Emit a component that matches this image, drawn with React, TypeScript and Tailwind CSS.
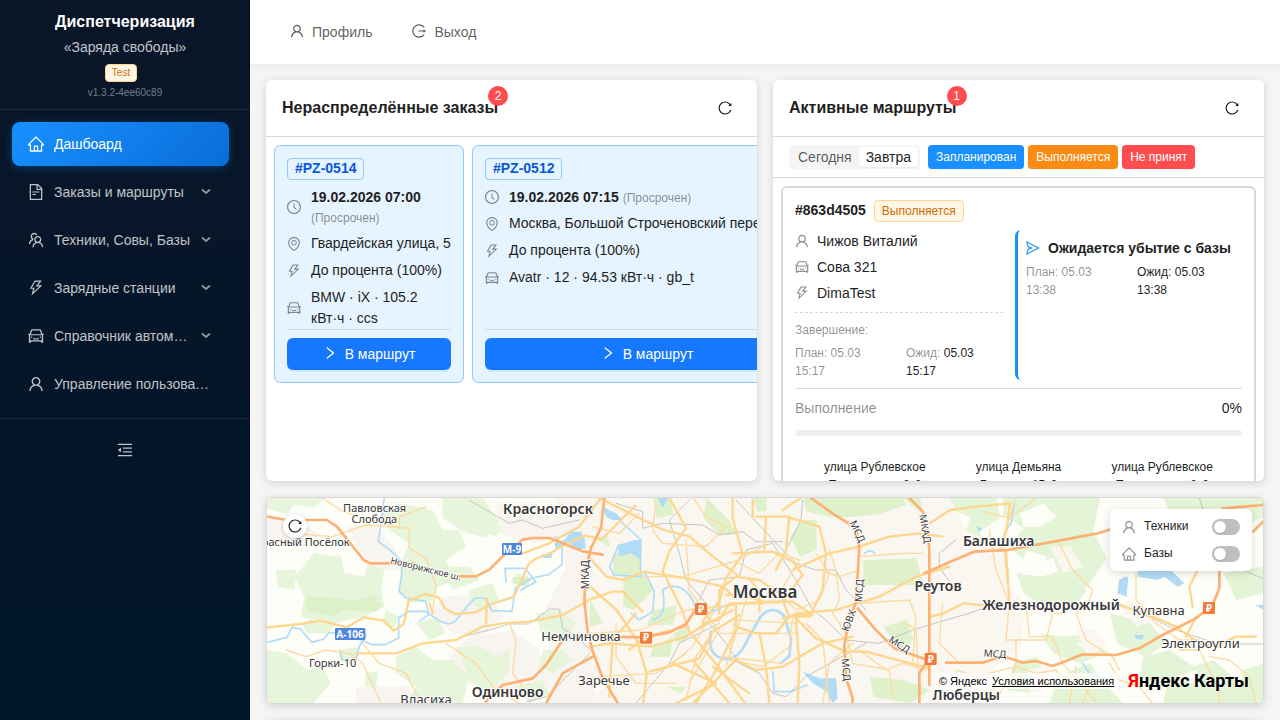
import React, { useState } from 'react';
import type { IconType } from 'react-icons';
import {
    AiOutlineCar,
    AiOutlineClockCircle,
    AiOutlineEnvironment,
    AiOutlineFileText,
    AiOutlineHome,
    AiOutlineLogout,
    AiOutlineMenuFold,
    AiOutlineReload,
    AiOutlineRight,
    AiOutlineSend,
    AiOutlineTeam,
    AiOutlineThunderbolt,
    AiOutlineUser,
} from 'react-icons/ai';

interface GlyphProps {
    icon: IconType;
    size?: number;
    className?: string;
}

// the icon set has an empty rim of 64 units, cut it off so that icons fill their box
const Glyph: React.FunctionComponent<GlyphProps> = ({ icon: Icon, size = 14, className = '' }) => {
    return <Icon size={size} viewBox="64 64 896 896" className={`shrink-0 ${className}`} />;
};

interface MenuEntry {
    label: string;
    icon: IconType;
    active?: boolean;
    nested?: boolean;
}

const menu: MenuEntry[] = [
    { label: 'Дашбоард', icon: AiOutlineHome, active: true },
    { label: 'Заказы и маршруты', icon: AiOutlineFileText, nested: true },
    { label: 'Техники, Совы, Базы', icon: AiOutlineTeam, nested: true },
    { label: 'Зарядные станции', icon: AiOutlineThunderbolt, nested: true },
    { label: 'Справочник автомобилей', icon: AiOutlineCar, nested: true },
    { label: 'Управление пользователями', icon: AiOutlineUser },
];

const Sidebar: React.FunctionComponent = () => {
    return (
        <aside className="w-[250px] shrink-0 bg-linear-to-b from-[#0a1628] to-[#001529] text-white">
            <div className="flex flex-col items-center border-b border-white/10 pt-2.5 pb-2">
                <h1 className="text-base leading-6 font-bold">Диспетчеризация</h1>
                <p className="mt-0.5 text-sm leading-[22px] text-white/75">«Заряда свободы»</p>
                <span className="mt-1.5 mr-2 rounded border border-[#ffd591] bg-[#fff7e6] px-1.5 text-[10px] leading-4 text-[#d46b08]">Test</span>
                <span className="mt-0.5 text-[10px] leading-[17px] text-white/45">v1.3.2-4ee60c89</span>
            </div>
            <nav className="flex flex-col gap-1 border-b border-white/10 py-3 pr-[21px] pl-3">
                {menu.map((item) => (
                    <a
                        key={item.label}
                        href="#"
                        className={
                            item.active
                                ? 'flex h-11 items-center rounded-lg bg-linear-[135deg] from-[#1890ff] to-[#096dd9] px-4 text-sm text-white shadow-[0_2px_8px_rgba(24,144,255,0.3)]'
                                : 'flex h-11 items-center rounded-lg px-4 text-sm text-white/75'
                        }
                    >
                        <Glyph icon={item.icon} size={16} />
                        <span className="ml-2.5 flex-1 truncate">{item.label}</span>
                        {item.nested && (
                            <svg className="mr-0.5 ml-2 shrink-0 opacity-75" width="10" height="8" viewBox="0 0 10 8" fill="none" stroke="currentColor" strokeWidth="1.8">
                                <path d="M1 1.500 5 5l4-3.500" />
                            </svg>
                        )}
                    </a>
                ))}
            </nav>
            <div className="flex justify-center pt-[15px]">
                <button aria-label="Свернуть меню" className="flex size-8 items-center justify-center text-white/75">
                    <Glyph icon={AiOutlineMenuFold} size={16} />
                </button>
            </div>
        </aside>
    );
};

interface PanelProps {
    title: string;
    count: number;
    children: React.ReactNode;
}

const Panel: React.FunctionComponent<PanelProps> = (props) => {
    return (
        <section className="flex h-[401px] min-w-0 flex-1 flex-col overflow-hidden rounded-md bg-white shadow-[0_2px_8px_rgba(0,0,0,0.15)]">
            <header className="flex h-[57px] shrink-0 items-center justify-between border-b border-[#d9d9d9] px-4">
                <h2 className="relative text-base leading-6 font-bold">
                    {props.title}
                    <span className="absolute -top-2.5 -right-2.5 size-5 rounded-full bg-[#ff4d4f] text-center text-xs leading-5 font-normal text-white">{props.count}</span>
                </h2>
                <button aria-label="Обновить" className="flex size-8 items-center justify-center">
                    <Glyph icon={AiOutlineReload} />
                </button>
            </header>
            {props.children}
        </section>
    );
};

interface Order {
    id: string;
    date: string;
    address: string;
    task: string;
    car: string;
    cardClass: string;
}

const orders: Order[] = [
    { id: '#PZ-0514', date: '19.02.2026 07:00', address: 'Гвардейская улица, 5', task: 'До процента (100%)', car: 'BMW · iX · 105.2 кВт·ч · ccs', cardClass: 'w-[190px]' },
    { id: '#PZ-0512', date: '19.02.2026 07:15', address: 'Москва, Большой Строченовский переулок', task: 'До процента (100%)', car: 'Avatr · 12 · 94.53 кВт·ч · gb_t', cardClass: 'w-[350px]' },
];

const OrderCard: React.FunctionComponent<{ order: Order }> = ({ order }) => {
    return (
        <article className={`${order.cardClass} flex shrink-0 flex-col rounded-md border border-[#91caff] bg-[#e6f4ff] p-3`}>
            <span className="self-start rounded border border-[#91caff] px-[7px] pb-0.5 text-sm leading-[18px] font-bold text-[#0958d9]">{order.id}</span>
            <div className="mt-[7px] flex flex-col gap-1.5 text-sm leading-[21px]">
                <div className="flex items-center gap-2.5 leading-5">
                    <Glyph icon={AiOutlineClockCircle} className="text-black/45" />
                    <p><b>{order.date}</b> <span className="text-xs leading-4 text-black/45">(Просрочен)</span></p>
                </div>
                <div className="flex items-center gap-2.5">
                    <Glyph icon={AiOutlineEnvironment} className="text-black/45" />
                    <p className="whitespace-nowrap">{order.address}</p>
                </div>
                <div className="flex items-center gap-2.5">
                    <Glyph icon={AiOutlineThunderbolt} className="text-black/45" />
                    <p>{order.task}</p>
                </div>
                <div className="flex items-center gap-2.5">
                    <Glyph icon={AiOutlineCar} className="text-black/45" />
                    <p>{order.car}</p>
                </div>
            </div>
            <div className="mt-auto border-t border-[#d9d9d9] pt-2">
                <button className="flex h-8 w-full items-center justify-center gap-2 rounded-md bg-[#1677ff] text-sm text-white shadow-[0_2px_0_rgba(5,145,255,0.1)]">
                    <Glyph icon={AiOutlineRight} className="mb-0.5" />
                    В маршрут
                </button>
            </div>
        </article>
    );
};

const stops = ['улица Рублевское Предместье, 2к2', 'улица Демьяна Бедного, 15к2', 'улица Рублевское Предместье, 2к2'];

const RouteCard: React.FunctionComponent = () => {
    return (
        <article className="shrink-0 rounded-md border-2 border-[#d9d9d9] p-3">
            <div className="flex items-start gap-2">
                <b className="text-sm leading-5">#863d4505</b>
                <span className="rounded border border-[#ffd591] bg-[#fff7e6] px-[7px] text-xs leading-5 text-[#d46b08]">Выполняется</span>
            </div>
            <div className="mt-2 flex gap-3">
                <div className="min-w-0 flex-1">
                    <div className="flex flex-col gap-1 border-b border-dashed border-[#d9d9d9] pb-2 text-sm leading-[22px]">
                        <p className="flex items-center gap-2"><Glyph icon={AiOutlineUser} className="text-black/45" />Чижов Виталий</p>
                        <p className="flex items-center gap-2"><Glyph icon={AiOutlineCar} className="text-black/45" />Сова 321</p>
                        <p className="flex items-center gap-2"><Glyph icon={AiOutlineThunderbolt} className="text-black/45" />DimaTest</p>
                    </div>
                    <p className="mt-2 text-xs leading-[18px] text-black/45">Завершение:</p>
                    <div className="mt-[5px] grid grid-cols-2 gap-x-3.5 text-xs leading-[18px]">
                        <p className="text-black/45">План: 05.03 15:17</p>
                        <p><span className="text-black/45">Ожид:</span> 05.03 15:17</p>
                    </div>
                </div>
                <div className="min-w-0 flex-1 rounded-l-md border-l-3 border-[#1890ff] p-2">
                    <p className="flex items-center gap-2 text-sm leading-5 font-bold whitespace-nowrap">
                        <Glyph icon={AiOutlineSend} className="text-[#1890ff]" />
                        Ожидается убытие с базы
                    </p>
                    <div className="mt-[5px] grid grid-cols-2 gap-x-3.5 text-xs leading-[18px]">
                        <p className="text-black/45">План: 05.03 13:38</p>
                        <p>Ожид: 05.03 13:38</p>
                    </div>
                </div>
            </div>
            <div className="mt-2 border-t border-[#d9d9d9] pt-2">
                <div className="flex justify-between text-sm leading-[22px]">
                    <span id="route-progress" className="text-black/45">Выполнение</span>
                    <span>0%</span>
                </div>
                <div role="progressbar" aria-labelledby="route-progress" aria-valuenow={0} className="mt-[11px] h-1.5 rounded-full bg-[#f0f0f0]"></div>
            </div>
            <ol className="mt-[22px] flex px-2 text-center text-xs leading-[18px]">
                {stops.map((stop, index) => (
                    <li key={index} className="flex-1 px-3">{stop}</li>
                ))}
            </ol>
        </article>
    );
};

// Map geometry. The map is drawn in three sheets laid side by side,
// the city and the east have their own origin (see the translate of each group).
const urbanWest = [
    'M270 110h90l60 70 20 60-70 0-60-60z',
    'M560 320l140-10 40 70-60 60-90-10-60-60z',
    'M720 40l120 0 110 60-20 40-100 20-100-30z',
    'M640 440l130-20 80 60 20 90-110 40-130-30-50-80z',
    'M900 24h120v620H870l-20-110 50-100-30-80 60-120z',
    'M33 90l90 0 60 40-40 40-110-20z',
    'M300 590l160 0 20 50H300z',
];
const woodsWest = [
    'M33 24h170l-30 30-60-10-20 30-60-20z',
    'M60 240h60l-5 60-50-10z',
    'M175 190l80 10 10 50 60 10 10-40 50 20-10 60 10 50-60 30-90 20-100-20 10-60-30-60z',
    'M370 60l60-20 100 20 30 60 50 0 20 50-60 40 30 60-80 30-70-30-20-40 30-70-60-40z',
    'M560 24h120l50 70-40 50-70-20-60-40z',
    'M690 90l50 20-20 30-60-20z',
    'M560 230l80 0 30 40-80 30z',
    'M440 250l60-20 50 40-20 60-60 10-40-30z',
    'M640 300l70-20 20 50-50 30-40-20z',
    'M780 250l40 10-10 30-40-10z',
    'M33 480l60 10 60 50 50-10 20 50-50 60H33z',
    'M140 400l60-30 40 30-20 30-70 0z',
    'M250 480l60-10-20 60-40-20z',
    'M390 360l40 20-20 40-30-20z',
    'M420 500l60-30 50 40 60 0 50 50-20 80H450l30-50-60-40z',
    'M480 400l60-20 30 50-50 20z',
    'M600 470l70 0 60 30 30-30 0 70-60 70-50-30-30-60z',
    'M330 545l35 0-5 50-35-10z',
    'M840 370l70-10 50 40-40 50-60 0z',
    'M860 480l60 0 30 30-60 40-40-20z',
    'M780 590l80-20 20 40-60 30z',
];
const parksWest = [
    'M150 320l100 5 40 10 60-20 30 30-20 20-100-5-30 20-80-20z',
    'M770 260l60 5-20 25-40-10z',
];
const woodsEast = [
    'M0 24h200l10 60-60 40 10 60-70-10-60-60-30-10z',
    'M220 24h290l-20 100 40 80-60 90-80-30-20-60-70 20-60-50 40-60-60-40z',
    'M100 190l80-10 60 60-10 70-60 20-50-50z',
    'M20 360l120-10 80 50 10 50-70 20-60 30-70-20z',
    'M260 250l70 10 80-20 60 60-40 60-90-10-60-40z',
    'M330 430l70 10 80-10 50 60-80 30-80-30z',
    'M250 520l70-20 30 60-40 50-80-10z',
    'M380 560l100-40 40 60 60 60H360z',
    'M540 370l120 30 50 60-60 40-90-40z',
    'M640 500l80-20 70 50 60-20 70 60v70H700l10-50-80-30z',
    'M880 250l119-20v80l-80 20z',
    'M940 540l59-20v120h-90z',
    'M700 24h299v60l-60 20-100-20-110 0z',
];
const clearings = [
    'M60 60l60 20-10 40-50-20z',
    'M270 70l70-30 40 40-50 30-50 0z',
    'M290 180l60 20-20 40-60-10z',
    'M110 380l50-10-10 30z',
    'M440 460l50 0-10 30z',
    'M740 560l60-20 10 50z',
];
const parksCity = [
    'M190 24h50l10 50-50 10z',
    'M350 24l70 70 20 40-50 0-50-50z',
    'M490 24h40l0 40-30 0z',
    'M640 90l40 0 0 90-50 20-30-60z',
    'M640 24h300l10 20-90 30-120 10-90-20z',
    'M70 190l80-10 0 70-80 10z',
    'M20 150l30-20 10 40z',
    'M100 260l60-10 30 50-60 60-30-10z',
    'M820 210l160-5 20 80-180 0z',
    'M880 410l70-20 20 60-40 30z',
    'M190 360l70-15-10 60-80 0z',
    'M250 430l50-20-10 40-30 10z',
    'M0 330l40 70-40 10z',
    'M190 470l60-30-10 60-60 0z',
    'M230 590l60 0-20 20z',
    'M840 560l100 10 80 30-60 40-110-20z',
    'M940 24l50 0 10 50z',
];
const urbanEast = [
    'M0 24h60l50 100 120 50 0 110 60 60-20 130-80 60 20 100H0z',
    'M360 170l60 0 40 60-60 20z',
    'M440 420l60 0 30 50-60 30z',
    'M560 340l80-10 40 60-60 20z',
    'M290 540l60-10 30 60-80 20z',
];
const waterFills = [
    'M895 160l30-10 20-25 30 0 10 20 5 30-30 5-20-20-40 20z',
    'M860 192l30 0-5 12-22 0z',
    'M1085 165l50-15 20 0 0 60-30-20-35 10z',
    'M1040 50l40 20 20 20-30 0-20-10z',
    'M1205 24h30l-15 30z',
    'M1640 545l50 20 50 0 5 60-15 14-20-35-40-25z',
    'M2605 260l12 0-5 60-28-10 5-40z',
    'M2645 240l100 0 40 40-20 10-40-30-20 10-60-10z',
    'M2160 110l20 5-10 12z',
    'M2635 435l30 0-8 15-20-5z',
    'M3000 345l21 0v15z',
];
const rivers = [
    'M33 457l60-15 15-30 25 5 35 40 35-10 15-18 35 0 35 10 60 25 40 0 40-20 0-60 30-20 50 0 45 30 25 8 20-8 40-50 20-20 30 0 20 38 60 2 10-70 50-30 50-10 40-30 0-50-20-35',
    'M385 24l-18 130 40 30 30 30 0 40-8 50 20 20 60 10 10 40-30 20',
    'M250 480l10 30 40 0 10-40 20-35',
    'M750 275l-3-40 60 0 33 40-45 25',
    'M1090 90l65 60-2 110-80-5-12-25 25-60',
    'M1165 245l30 60-5 60-40 25-25-20',
    'M1220 300c40-25 80-5 100 55',
    'M1220 300c10 60 0 80-30 90',
    'M1370 365l40-20 20 0',
    'M1551 545l3 60 50 0 50-20',
    'M2275 40l-10 60-15 20',
    'M1825 190q20-15 30 0',
    'M2480 520l20 30 60 20',
];
const minorRoads = [
    'M100 130l130 10 100-35 130 10 0 60 50 30 30 80-10 80',
    'M90 480l60 20 60-20 70 10 40 30 60 130',
    'M320 460l50 60 80 30 40 80',
    'M570 460l30 20 60 40 50 70 80 50',
    'M760 400l20 50-10 100 30 40',
    'M430 110l0-30 80-30',
    'M200 24l60 40 170 50',
    'M1150 70l-60 60-80-20',
    'M1200 40l-10 80 30 40 130 10 60-60-60-30-40-60',
    'M1290 150l10 150 80 110-60 90-30 130',
    'M1160 260l120 0 170-50 70-40',
    'M1002 430l150-10 140-60 150-15',
    'M1450 220l60 30 60-60 60 20-60 100 50 50 70-30 30-80-40-60',
    'M1250 520l60-50 60-100M1300 580l90-160M1440 370l-20 140 100 20 80-60 10-90',
    'M1400 500l180 20M1380 430l240 0M1440 390l180 10M1470 330l-60 200M1650 400l50 50 20 190',
    'M1080 400l0 100 60 80 120 0M1030 560l170-10 90-60',
    'M1720 180l20 60 10 90-20 40 40 60 20 90 110 20 10 80',
    'M1810 240l-60 20-60-20M1810 340l150-10 20 50-10 140',
    'M1950 400l30 20 10 160M1810 200l130-10 60 0',
    'M1810 480l80 60 50-20 70 20 20-60M1700 640l20-120 70-60',
    'M2200 120l20 120 40 100-10 110 120 0 20-80 40 0',
    'M2260 340l50 0 10 100 70 0 30 80 120 140',
    'M2410 160l40 80 60 60-10 30-40 40 30 80 80 50 20 40',
    'M2280 24l-40 120 20 180M2340 24l-80 60-80-20',
    'M2640 250l0 80 60 70 70 50 60 0M2770 480l60 0 60 120 0 40',
    'M2860 500l60 10 60 50 20 80M2100 540l60 20 120-30 60 20 60-10 40 50 60 0-20 50',
    'M2280 450l0 80-60 100M2060 340l-10 120 60 60',
    'M2560 520l30 50 60 20 40 50M2440 640l20-110',
];
const roads = [
    'M33 412l100-10 60-10 80 20 50-30 60 10 20 20 10 10 30-20 15-70 50-20 40 10 20 35 30 15 60-5 50-25 60-20 10-10 40-90 20-15 50-20 40-25 60-25 50 10 60-60 40-40',
    'M300 490l120 0 80-30 100-10 80-40 60-10 80-5 100-20 90-50 60-20 30 0 60 60',
    'M690 400l3-75M520 340l10 30',
    'M800 190l80-30 90-50 60-80',
    'M1030 24l100 50 90 45 80 20 70 60 80 60',
    'M1002 205l50 55 50 10 60-25 130 20 110 25 30 30',
    'M1240 24l50 90-50 70-20 60 60 120 20 60 90 110 80 110',
    'M1430 24l0 60 30 110-50 70-20 70-50 60',
    'M1490 80l0-50M1500 80l100 0-10 100-30 60M1580 60l60-40M1530 80l-5 100M1590 80l100 30 20 80-10 110-40 80-60 0',
    'M1430 190l120-5 60 30 30 40-60 80-60 0-60-20-50 0',
    'M1440 340l170-5 60 40-60 0-30 10M1440 340l0 70 60 20 60 0 40-50-30-70-60-40-70-10-50 40 0 70M1480 265l30 40 0 60',
    'M1340 400l50-10 30-50 100 0M1320 420l110-60M1290 440l60-40',
    'M1002 470l60-10 120 10 110-30',
    'M1060 620l10-170 70-80M1002 290l80 70 60 90 30 100-10 90',
    'M1510 430l20 100 10 110M1440 420l-60 120-60 100M1440 510l-130 130M1370 530l110 80M1310 510l110 130M1250 520l130 60-120 60',
    'M1620 390l10 130-5 120M1620 385l60 60 90 40 60 0 190 50M1620 370l120-10 130-40 110-60 100-30',
    'M1610 240l110-50 90-20 90-30 90-10 70 10',
    'M1120 480l50-40 120-30M1180 545l150-40 40-80 80-50',
    'M1440 510l60 30 80-10 120-70 90-20',
    'M2022 100l60-40 80-10 100-10-10 80-20 60M2250 180l10 160',
    'M2022 380l40-10 60-30 100 10M2690 380l70 30 70 50 50 10 60-30 60 0M2820 380l-30 60M2810 350l-10-60 30-60 60-20',
    'M2580 340l130 50',
];
const highways = [
    'M33 80l60 10 120 0 30 20 80 100 20 10 130 0M610 259l50 0 40-20 40-40 60-50 30-5 50 0 100 40 60 10',
    'M1045 24l-10 90-30 60-15 60-5 100 10 90 15 60 30 80 60 100',
    'M870 640l50-90 90-50M690 635l50-50 90-20 40-40 60-90',
    'M1665 24l70 50 65 40 10 60-10 160-10 30-15 50-10 50 5 100 20 60-5 80',
    'M1805 355l50 60 60 60 100 35',
    'M1960 24l40 40 15 50 5 70 0 400',
    'M1040 440l120 2 80-15 50-25 30-45',
    'M2005 250l90-40 60-25 100-5 110-20 160-30 100-30M2900 55l121-10M2890 245l0 50-20 50-50 40-100 50-70 40-70 20-100-2-50 20-40 15-50-15-40 5-60-20-60 20-50 0-60 0',
    'M1990 640l0-90 40-60M3021 95l-30 30',
];
const rails = [
    'M640 30l50 30 70 40 40-10 60 25 110-25',
    'M620 440l80-20 60-18 60 0 60-45 30 0 10 60 40 20 50 50',
    'M1002 490l-80 80-50 50-60 15',
    'M1080 40l80 25 0 50 60-15 120 5 50 30 70-10 40 30 80 0',
    'M1440 30l120 130 60 60 60 20 60 0 30 60 60 60M1300 30l-60 60 30 100 20 80 60 70 10 60 50 60 40 60 60 30 40 60 40 10 60-60 180-100',
    'M1330 330l30-60 90-10 20-80 80-20 70 110 50 90 40 30 60 60 100 10 100-40 100-30 70-20 80-30 50 20',
    'M1140 640l100-120 30-60 120-60M1640 30l-5 60-40 80M2100 150l-50 40 0 40 40 60M2830 24l20 60M2960 240l60 25M2680 380l80 40 90 30M2940 462h81',
];

interface MapLabel {
    x: number;
    y: number;
    size: number;
    text: string;
    bold?: boolean;
    turn?: number;
}

const mapLabels: MapLabel[] = [
    { x: 356, y: 65, size: 33, text: 'Павловская' },
    { x: 355, y: 99, size: 33, text: 'Слобода' },
    { x: 149, y: 167, size: 33, text: 'расный Посёлок' },
    { x: 876, y: 72, size: 42, text: 'Красногорск', bold: true },
    { x: 230, y: 530, size: 33, text: 'Горки-10' },
    { x: 510, y: 641, size: 39, text: 'Власиха' },
    { x: 755, y: 620, size: 42, text: 'Одинцово', bold: true },
    { x: 975, y: 454, size: 39, text: 'Немчиновка' },
    { x: 1044, y: 586, size: 39, text: 'Заречье' },
    { x: 1527, y: 324, size: 51, text: 'Москва', bold: true },
    { x: 2046, y: 303, size: 42, text: 'Реутов', bold: true },
    { x: 2228, y: 167, size: 42, text: 'Балашиха', bold: true },
    { x: 2385, y: 360, size: 42, text: 'Железнодорожный', bold: true },
    { x: 2708, y: 376, size: 39, text: 'Купавна' },
    { x: 2833, y: 474, size: 39, text: 'Электроугли' },
    { x: 2131, y: 630, size: 42, text: 'Люберцы', bold: true },
    { x: 510, y: 246, size: 27, text: 'Новорижское ш.', turn: 14 },
    { x: 990, y: 264, size: 30, text: 'МКАД', turn: -90 },
    { x: 1804, y: 134, size: 30, text: 'МСД', turn: 65 },
    { x: 1810, y: 312, size: 30, text: 'МСД', turn: -87 },
    { x: 1779, y: 402, size: 30, text: 'ЮВХ', turn: -70 },
    { x: 1770, y: 549, size: 30, text: 'МСД', turn: 84 },
    { x: 1930, y: 474, size: 30, text: 'МСД', turn: 32 },
    { x: 2007, y: 126, size: 30, text: 'МКАД', turn: 80 },
    { x: 2217, y: 502, size: 30, text: 'МСД', turn: 4 },
];

const tollPoints = [[1335, 357], [1170, 443], [2024, 507], [2859, 354]];

const CityMap: React.FunctionComponent = () => {
    return (
        <svg className="h-[205px] w-full" viewBox="33 24 2988 615" preserveAspectRatio="xMidYMid slice" aria-label="Карта Москвы">
            <rect x="-3000" y="0" width="9000" height="700" fill="#fefef8" />
            {urbanWest.map((d) => <path key={d} d={d} fill="#f8f4ef" />)}
            {woodsWest.map((d) => <path key={d} d={d} fill="#e7f5db" />)}
            {parksWest.map((d) => <path key={d} d={d} fill="#dcf1ca" />)}
            <g transform="translate(1002 0)">
                <path d="M0 24H1060V640H10l20-60-30-60z" fill="#faf6f0" />
                {parksCity.map((d) => <path key={d} d={d} fill="#def1cb" />)}
            </g>
            <g transform="translate(2022 0)">
                {woodsEast.map((d) => <path key={d} d={d} fill="#e4f4d6" />)}
                {clearings.map((d) => <path key={d} d={d} fill="#fefef8" />)}
                {urbanEast.map((d) => <path key={d} d={d} fill="#faf6f0" />)}
            </g>
            {waterFills.map((d) => <path key={d} d={d} fill="#b1dcf7" />)}
            <g fill="none" strokeLinejoin="round" strokeLinecap="round">
                {rivers.map((d) => <path key={d} d={d} stroke="#b1dcf7" strokeWidth="5" />)}
                <path d="M1365 425q-15 75 45 83q40 0 65-60l40-70q35-35 70 0l20 70-5 50-25 20" stroke="#b1dcf7" strokeWidth="8" />
                {rails.map((d) => <path key={d} d={d} stroke="#c2c2c2" strokeWidth="3" strokeDasharray="9 3" />)}
                {minorRoads.map((d) => <path key={d} d={d} stroke="#fcdaa0" strokeWidth="4" />)}
                {roads.map((d) => <path key={d} d={d} stroke="#fdd68f" strokeWidth="7" />)}
                {highways.map((d) => <path key={d} d={d} stroke="#fdb173" strokeWidth="8" />)}
            </g>
            <g fontFamily="'Noto Sans', sans-serif" textAnchor="middle" fill="#35383d" stroke="#fffdf8" strokeWidth="6" strokeLinejoin="round" paintOrder="stroke">
                {mapLabels.map((label, index) => (
                    <text
                        key={index}
                        x={label.x}
                        y={label.y}
                        fontSize={label.size}
                        fontWeight={label.bold ? 600 : 400}
                        transform={label.turn ? `rotate(${label.turn} ${label.x} ${label.y - 10})` : undefined}
                    >
                        {label.text}
                    </text>
                ))}
            </g>
            <g fontFamily="'Noto Sans', sans-serif" textAnchor="middle" fill="#fff" fontWeight="700" fontSize="30">
                <rect x="738" y="159" width="60" height="36" rx="4" fill="#4f86e0" />
                <text x="768" y="188">М-9</text>
                <rect x="237" y="414" width="91" height="36" rx="4" fill="#4f86e0" />
                <text x="282" y="443">А-106</text>
                {tollPoints.map(([x, y]) => (
                    <g key={x}>
                        <rect x={x - 18} y={y - 18} width="36" height="36" rx="4" fill="#f47a3c" />
                        <text x={x} y={y + 11}>₽</text>
                    </g>
                ))}
            </g>
        </svg>
    );
};

const layers = [
    { id: 'technicians', label: 'Техники', icon: AiOutlineUser },
    { id: 'bases', label: 'Базы', icon: AiOutlineHome },
];

const MapPanel: React.FunctionComponent = () => {
    const [shown, setShown] = useState<string[]>([]);
    const toggle = (id: string) => {
        setShown(shown.includes(id) ? shown.filter((s) => s !== id) : [...shown, id]);
    }
    return (
        <section className="relative shrink-0 overflow-hidden rounded-md border border-[#d9d9d9] bg-white shadow-[0_2px_8px_rgba(0,0,0,0.15)]">
            <CityMap />
            <button aria-label="Обновить карту" className="absolute top-4 left-4 flex size-6 items-center justify-center rounded-full bg-white shadow-[0_1px_4px_rgba(0,0,0,0.2)]">
                <Glyph icon={AiOutlineReload} />
            </button>
            <div className="absolute top-[11px] right-[11px] flex w-[142px] flex-col gap-[7px] rounded-md bg-white px-3 pt-2 pb-[7px] text-xs leading-[18px] shadow-[0_2px_8px_rgba(0,0,0,0.15)]">
                {layers.map((layer) => (
                    <div key={layer.id} className="flex h-5 items-center">
                        <Glyph icon={layer.icon} className="text-black/45" />
                        <label htmlFor={layer.id} className="ml-2 flex-1 pb-0.5">{layer.label}</label>
                        <input
                            id={layer.id}
                            type="checkbox"
                            role="switch"
                            checked={shown.includes(layer.id)}
                            onChange={() => toggle(layer.id)}
                            className="h-4 w-7 appearance-none rounded-full bg-[#bfbfbf] p-0.5 before:block before:size-3 before:rounded-full before:bg-white before:shadow-sm checked:bg-[#1677ff] checked:before:ml-3"
                        />
                    </div>
                ))}
            </div>
            <div className="absolute right-[14px] bottom-2.5 flex items-center gap-2.5">
                <p className="bg-white/70 px-1 text-[11px] leading-4 text-black">
                    © Яндекс <a href="#" className="ml-0.5 underline">Условия использования</a>
                </p>
                <p className="font-[Roboto,sans-serif] text-lg leading-6 font-bold text-black [text-shadow:0_0_2px_#fff]">
                    <span className="text-[#f00]">Я</span>ндекс Карты
                </p>
            </div>
        </section>
    );
};

const App: React.FunctionComponent = () => {
    return (
        <div className="flex h-screen bg-[#f5f5f5] font-['Liberation_Sans',Arial,sans-serif] text-[#1f1f1f]">
            <Sidebar />
            <div className="flex min-w-0 flex-1 flex-col">
                <header className="z-10 flex h-16 shrink-0 items-center bg-white px-5 text-sm text-black/65 shadow-[0_2px_8px_rgba(0,0,0,0.06)]">
                    <a href="#" className="flex items-center gap-2 px-5"><Glyph icon={AiOutlineUser} className="mb-0.5" />Профиль</a>
                    <a href="#" className="flex items-center gap-2 px-5"><Glyph icon={AiOutlineLogout} className="mb-0.5" />Выход</a>
                </header>
                <main className="flex min-h-0 flex-1 flex-col gap-4 overflow-y-auto p-4 [scrollbar-width:none]">
                    <div className="flex shrink-0 gap-4">
                        <Panel title="Нераспределённые заказы" count={2}>
                            <div className="flex items-start overflow-x-auto p-2 [scrollbar-width:none]">
                                <div className="flex gap-2">
                                    {orders.map((order) => <OrderCard key={order.id} order={order} />)}
                                </div>
                            </div>
                        </Panel>
                        <Panel title="Активные маршруты" count={1}>
                            <div className="flex shrink-0 items-center gap-2 border-b border-[#d9d9d9] px-4 py-2">
                                <div className="flex rounded bg-[#f5f5f5] p-0.5 text-sm leading-5">
                                    <button className="px-[7px] text-black/65">Сегодня</button>
                                    <button className="rounded-sm bg-white px-[7px] shadow-xs">Завтра</button>
                                </div>
                                <div className="flex gap-1 text-xs text-white">
                                    <button className="h-6 rounded bg-[#1890ff] px-2 shadow-xs">Запланирован</button>
                                    <button className="h-6 rounded bg-[#fa8c16] px-2 shadow-xs">Выполняется</button>
                                    <button className="h-6 rounded bg-[#ff4d4f] px-2 shadow-xs">Не принят</button>
                                </div>
                            </div>
                            <div className="flex min-h-0 flex-col overflow-y-auto p-2 [scrollbar-width:none]">
                                <RouteCard />
                            </div>
                        </Panel>
                    </div>
                    <MapPanel />
                    <section className="h-64 shrink-0 rounded-md bg-white shadow-[0_2px_8px_rgba(0,0,0,0.15)]"></section>
                </main>
            </div>
        </div>
    );
};

export default App;
